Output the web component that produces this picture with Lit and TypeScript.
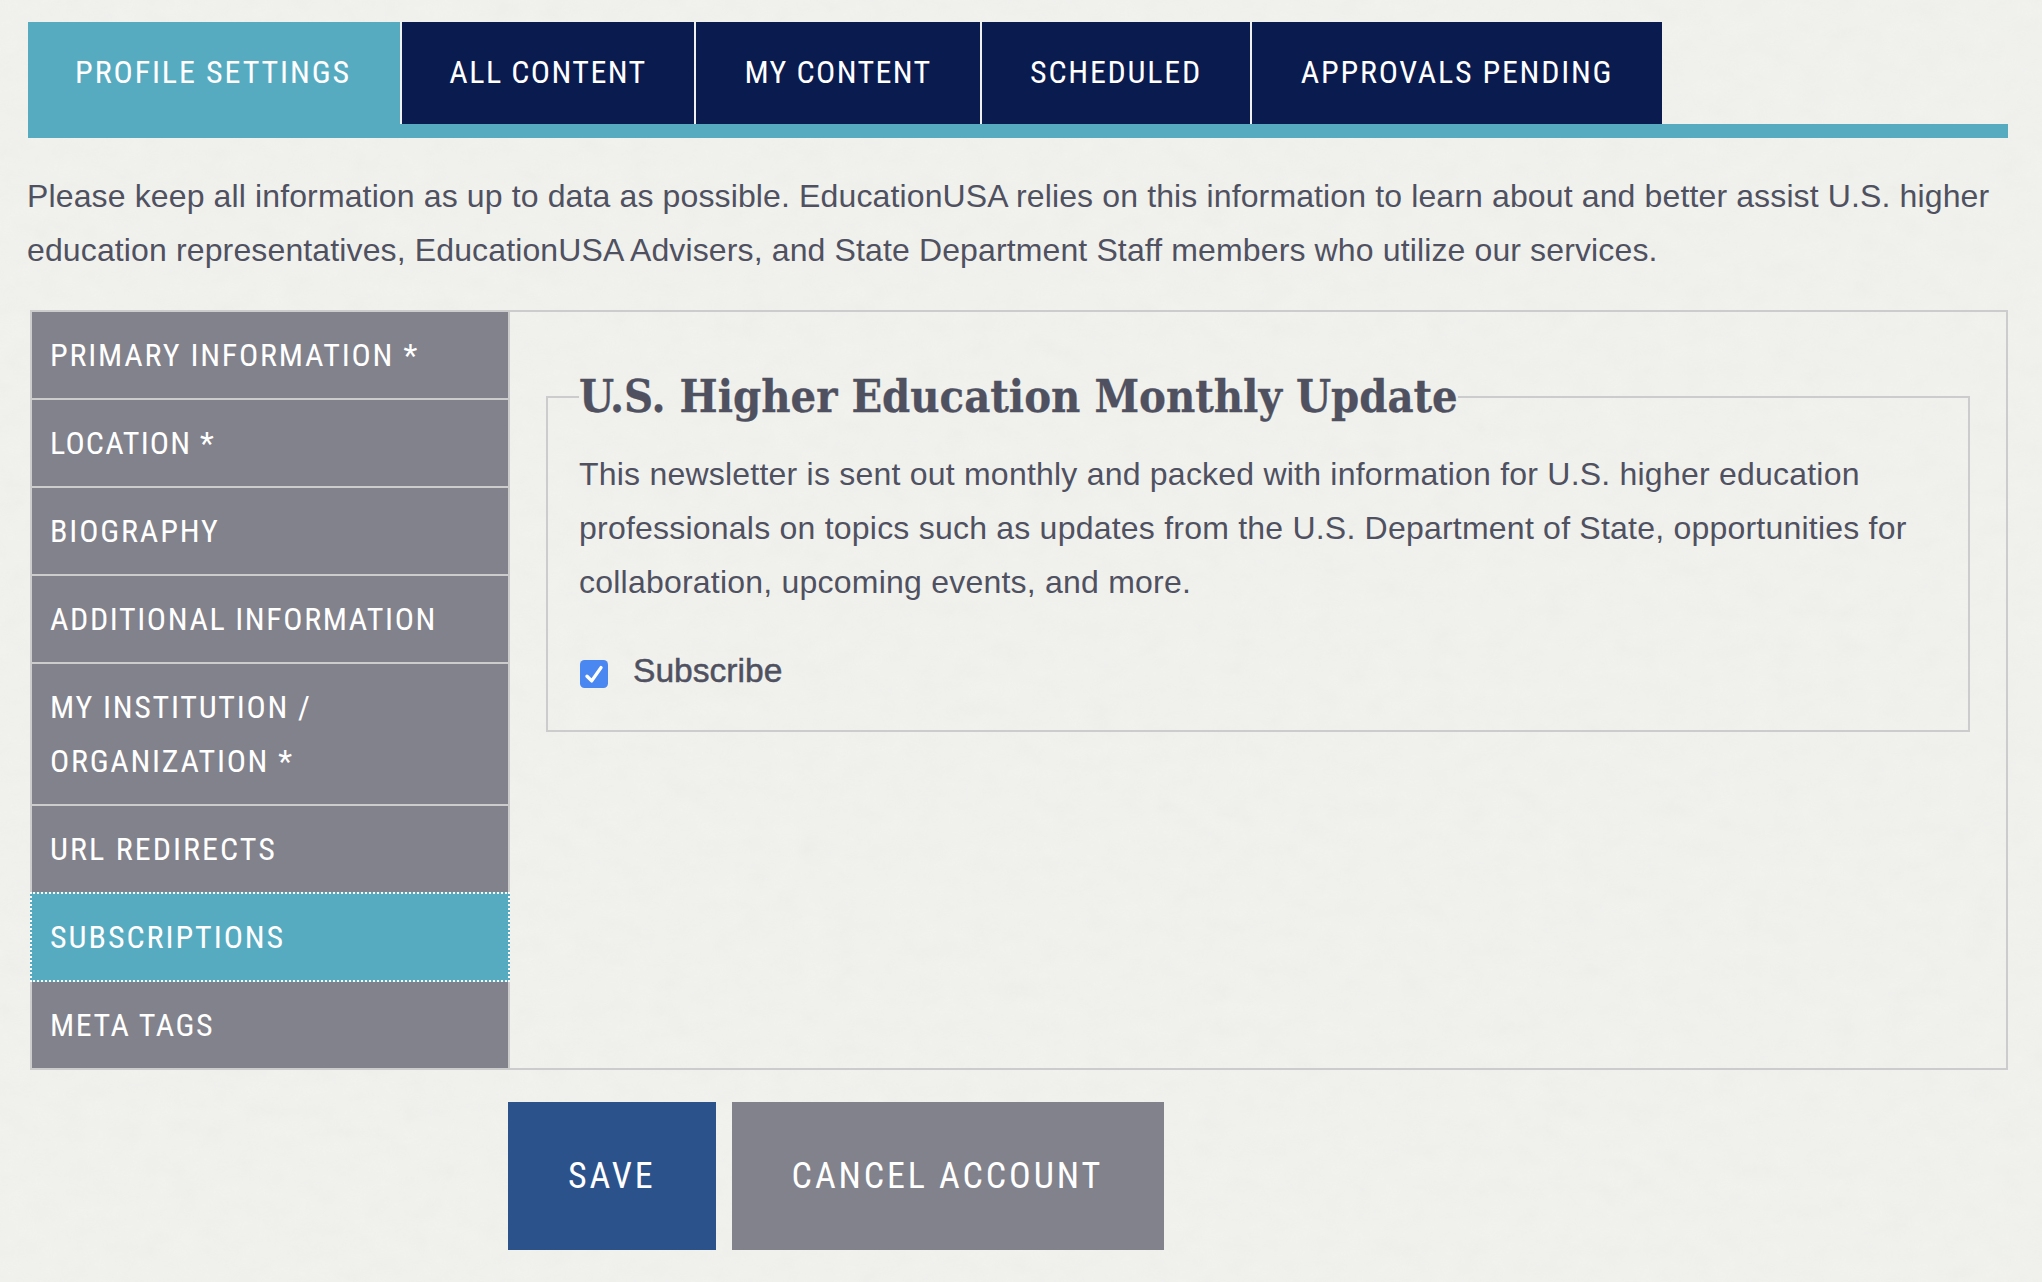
import { LitElement, html, css } from "lit";
import { customElement } from "lit/decorators.js";

const TABS = [
  { label: "PROFILE SETTINGS", width: 372, spacing: 1.9 },
  { label: "ALL CONTENT", width: 292, spacing: 1.43 },
  { label: "MY CONTENT", width: 284, spacing: 1.38 },
  { label: "SCHEDULED", width: 268, spacing: 1.75 },
  { label: "APPROVALS PENDING", width: 410, spacing: 1.75 },
];
const SIDE = [
  { label: "PRIMARY INFORMATION *", spacing: 1.8 },
  { label: "LOCATION *", spacing: 1.2 },
  { label: "BIOGRAPHY", spacing: 1.85 },
  { label: "ADDITIONAL INFORMATION", spacing: 1.61 },
  { label: "MY INSTITUTION / ORGANIZATION *", spacing: 1.72 },
  { label: "URL REDIRECTS", spacing: 2.05 },
  { label: "SUBSCRIPTIONS", spacing: 1.95 },
  { label: "META TAGS", spacing: 1.56 },
];

@customElement("app-root")
export class AppRoot extends LitElement {
  static styles = css`
    :host { display: block; position: relative; width: 2042px; height: 1282px; overflow: hidden; background: #f1f1ee; color: #4f5160; font-family: "Liberation Sans", Arial, sans-serif; }
    .noise { position: absolute; inset: 0; width: 100%; height: 100%; opacity: .04; pointer-events: none; }
    .page { position: relative; display: flex; flex-direction: column; padding: 22px 34px 0 28px; }
    .narrow { font-family: "Roboto Condensed", "Roboto", sans-serif; font-stretch: 75%; font-weight: 400; color: #fff; }
    .tabs { display: flex; gap: 2px; height: 102px; border-bottom: 14px solid #57abc1; }
    .tab { height: 102px; box-sizing: border-box; text-align: center; font-size: 32px; line-height: 100px; background: #0a1b4f; white-space: nowrap; }
    .tab.active { background: #57abc1; height: 116px; padding-right: 2px; }
    .intro { margin: 31px 0 0 -1px; font-size: 32px; line-height: 54px; letter-spacing: .13px; }
    .panel { display: flex; margin: 33px 0 0 2px; height: 760px; box-sizing: border-box; border: 2px solid #ccc; }
    .side { width: 478px; box-sizing: border-box; flex: none; display: flex; flex-direction: column; border-right: 2px solid #ccc; }
    .item { padding: 16px 18px; box-sizing: border-box; font-size: 32px; line-height: 54px; background: #82828c; border-bottom: 2px solid #ccc; }
    .item:last-child { border-bottom: 0; }
    .item.active { position: relative; width: 480px; height: 90px; margin: -2px 0 0 -2px; background: #57abc1; border: 2px dotted #fff; }
    .content { flex: 1; padding: 59px 36px 0 36px; }
    fieldset { margin: 0; padding: 0 32px 32px 32px; border: 2px solid #ccc; min-width: 0; }
    legend { margin-left: -1px; padding: 0; font-family: "DejaVu Serif Condensed", "DejaVu Serif", serif; font-weight: 700; font-size: 44.8px; line-height: 52px; color: #4f5160; -webkit-text-stroke: .3px #4f5160; }
    .body { margin: 24px 0 0 -1px; font-size: 32px; line-height: 54px; letter-spacing: .22px; }
    .check { display: flex; align-items: center; margin-top: 35px; gap: 25px; font-size: 33.6px; line-height: 54px; -webkit-text-stroke: .5px #4f5160; }
    .check svg { width: 28px; height: 28px; flex: none; margin-top: 6px; }
    .actions { display: flex; gap: 16px; margin: 32px 0 0 480px; }
    .btn { height: 148px; line-height: 148px; font-size: 36px; letter-spacing: 2.9px; padding: 0 61px 0 60px; background: #82828c; white-space: nowrap; }
    .btn.save { background: #2b528b; padding: 0 60px; }
  `;

  render() {
    return html`
      <svg class="noise" aria-hidden="true"><filter id="n"><feTurbulence type="fractalNoise" baseFrequency=".035 .05" numOctaves="4" seed="4"/><feColorMatrix type="saturate" values="0"/></filter><rect width="100%" height="100%" filter="url(#n)"/></svg>
      <div class="page">
        <nav class="tabs narrow">
          ${TABS.map((t, i) => html`<div class="tab ${i === 0 ? "active" : ""}" style="width:${t.width}px;letter-spacing:${t.spacing}px">${t.label}</div>`)}
        </nav>
        <p class="intro">Please keep all information as up to data as possible. EducationUSA relies on this information to learn about and better assist U.S. higher education representatives, EducationUSA Advisers, and State Department Staff members who utilize our services.</p>
        <section class="panel">
          <aside class="side narrow">
            ${SIDE.map((s) => html`<div class="item ${s.label === "SUBSCRIPTIONS" ? "active" : ""}" style="letter-spacing:${s.spacing}px">${s.label}</div>`)}
          </aside>
          <div class="content">
            <fieldset>
              <legend>U.S. Higher Education Monthly Update</legend>
              <p class="body">This newsletter is sent out monthly and packed with information for U.S. higher education professionals on topics such as updates from the U.S. Department of State, opportunities for collaboration, upcoming events, and more.</p>
              <label class="check">
                <svg viewBox="0 0 28 28"><rect width="28" height="28" rx="4.5" fill="#4b87f1"/><path d="M7 16.3l4.7 4.6L21 7.6" fill="none" stroke="#fff" stroke-width="3.4" stroke-linecap="round" stroke-linejoin="round"/></svg>
                Subscribe
              </label>
            </fieldset>
          </div>
        </section>
        <div class="actions narrow">
          <div class="btn save">SAVE</div>
          <div class="btn">CANCEL ACCOUNT</div>
        </div>
      </div>
    `;
  }
}
